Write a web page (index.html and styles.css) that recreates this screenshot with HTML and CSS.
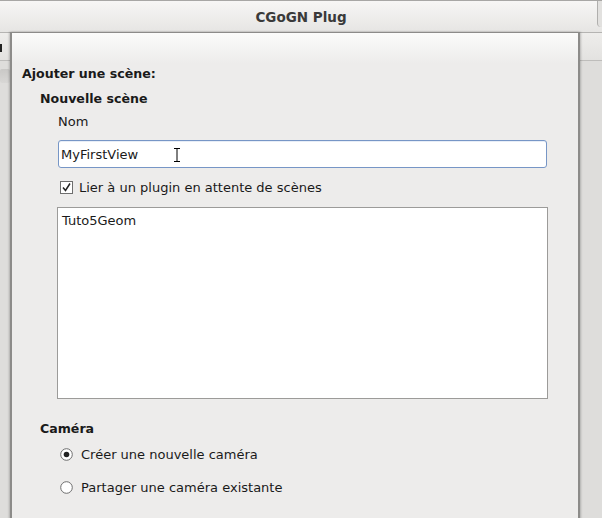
FILE: index.html
```html
<!DOCTYPE html>
<html>
<head>
<meta charset="utf-8">
<link rel="stylesheet" href="styles.css">
</head>
<body>
<div class="window">
  <div class="titlebar"><span class="title">CGoGN Plug</span><span class="corner"></span></div>
  <div class="toolbar"><span class="cut"></span></div>
  <div class="content">
    <div class="ghost-icon"></div>
  </div>
</div>
<div class="dialog">
  <div class="dialog-body">
    <div class="heading">Ajouter une scène:</div>
    <div class="section">
      <div class="subheading">Nouvelle scène</div>
      <div class="indent">
        <div class="label">Nom</div>
        <div class="entry"><span class="entry-text">MyFirstView</span><svg class="ibeam" width="8" height="14" viewBox="0 0 8 14"><path d="M1 0.5h6M4 0.5v13M1 13.5h6" stroke="#000" stroke-width="1" fill="none"/></svg></div>
        <div class="check-row">
          <svg class="checkbox" width="13" height="13" viewBox="0 0 13 13"><rect x="0.5" y="0.5" width="12" height="12" fill="#fff" stroke="#6e6e6e"/><path d="M3 6.5l2.5 3 4.5-7" stroke="#222" stroke-width="1.5" fill="none"/></svg>
          <span>Lier à un plugin en attente de scènes</span>
        </div>
        <div class="listbox"><div class="list-item">Tuto5Geom</div></div>
      </div>
      <div class="subheading camera">Caméra</div>
      <div class="indent">
        <div class="radio-row">
          <svg class="radio" width="13" height="13" viewBox="0 0 13 13"><circle cx="6.5" cy="6.5" r="5.8" fill="#fff" stroke="#6e6e6e"/><circle cx="6.5" cy="6.5" r="2.8" fill="#222"/></svg>
          <span>Créer une nouvelle caméra</span>
        </div>
        <div class="radio-row">
          <svg class="radio" width="13" height="13" viewBox="0 0 13 13"><circle cx="6.5" cy="6.5" r="5.8" fill="#fff" stroke="#6e6e6e"/></svg>
          <span>Partager une caméra existante</span>
        </div>
      </div>
    </div>
  </div>
</div>
</body>
</html>
```
FILE: styles.css
```css
html, body {
  margin: 0;
  padding: 0;
  height: 100%;
  overflow: hidden;
}
body {
  background: #dcdbd9;
  font-family: "DejaVu Sans", "Liberation Sans", sans-serif;
  font-size: 13px;
  color: #1a1a1a;
  position: relative;
}
.window {
  display: flex;
  flex-direction: column;
  height: 100%;
}
.titlebar {
  height: 31px;
  border-top: 1px solid #a8a7a5;
  border-bottom: 1px solid #b5b4b2;
  background: linear-gradient(#f7f6f5, #e6e5e3);
  display: flex;
  align-items: center;
  justify-content: center;
  position: relative;
}
.title {
  font-weight: bold;
  font-size: 13.5px;
  color: #3a3a3a;
  margin-top: 1px;
}
.corner {
  position: absolute;
  right: 0;
  top: 0;
  width: 4px;
  height: 26px;
  border-left: 1px solid #b0afad;
  border-bottom-left-radius: 4px;
  background: #e2e1df;
}
.toolbar {
  height: 27px;
  background: linear-gradient(#eeedeb, #e3e2e0);
  border-bottom: 1px solid #bebdbb;
  display: flex;
  align-items: center;
}
.cut {
  display: block;
  width: 2px;
  height: 8px;
  background: #222;
  margin-top: 3px;
}
.content {
  flex: 1;
  background: #dedddb;
  position: relative;
}
.ghost-icon {
  position: absolute;
  left: 0;
  top: 8px;
  width: 10px;
  height: 14px;
  background: linear-gradient(#c9c8c6, #d8d7d5);
  border-radius: 2px;
}
.dialog {
  position: absolute;
  left: 10px;
  top: 32px;
  width: 566px;
  bottom: -20px;
  border: 1px solid #8c8b89;
  border-left-width: 2px;
  border-right-width: 2px;
  background: linear-gradient(#fbfbfa 0px, #edeceb 30px);
  box-shadow: 1px 0 2px rgba(0,0,0,0.2), -1px 0 2px rgba(0,0,0,0.2);
}
.dialog-body {
  padding: 33px 0 0 10px;
}
.heading {
  font-weight: bold;
  font-size: 12.6px;
  height: 25px;
  line-height: 16px;
}
.section {
  padding-left: 18px;
}
.subheading {
  font-weight: bold;
  font-size: 12.6px;
  height: 23px;
  line-height: 16px;
}
.subheading.camera {
  margin-top: 22px;
  height: 24px;
}
.indent {
  padding-left: 18px;
}
.label {
  height: 26px;
  line-height: 16px;
}
.entry {
  width: 489px;
  height: 28px;
  box-sizing: border-box;
  border: 1px solid #7796c6;
  border-radius: 3px;
  background: #fff;
  display: flex;
  align-items: center;
  padding-left: 2px;
  box-shadow: inset 0 1px 0 #e8eef7;
}
.entry-text {
  width: 112px;
}
.ibeam {
  margin-top: 1px;
}
.check-row {
  display: flex;
  align-items: center;
  gap: 6px;
  height: 18px;
  margin-top: 10px;
  padding-left: 2px;
}
.checkbox {
  flex: none;
}
.listbox {
  margin-top: 11px;
  margin-left: -1px;
  width: 491px;
  height: 192px;
  box-sizing: border-box;
  border: 1px solid #9c9b99;
  background: #fff;
}
.list-item {
  padding: 5px 0 0 4px;
  line-height: 16px;
}
.radio-row {
  display: flex;
  align-items: center;
  gap: 8px;
  height: 18px;
  padding-left: 2px;
}
.radio-row + .radio-row {
  margin-top: 15px;
}
.radio {
  flex: none;
}
```
